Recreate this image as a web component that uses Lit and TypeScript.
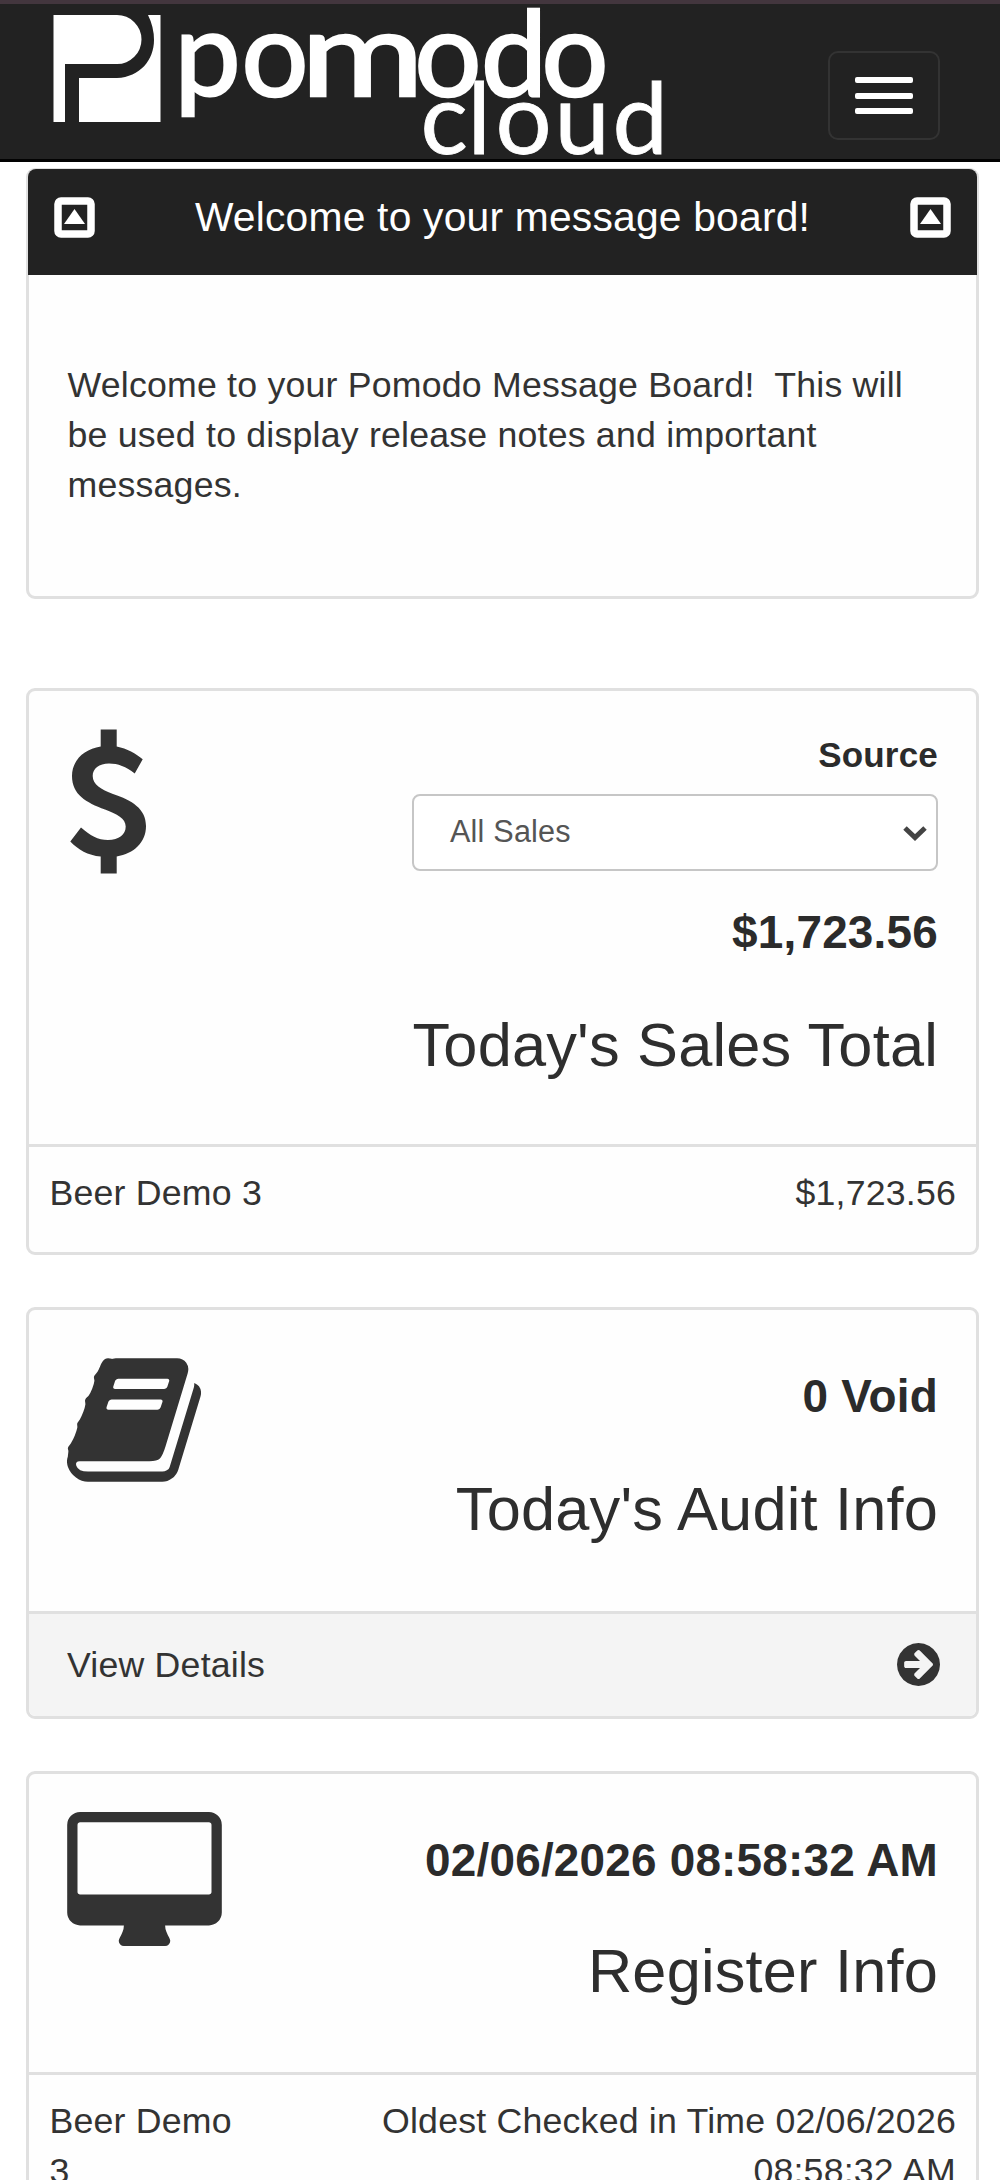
import { LitElement, html, css, svg } from "lit";
import { customElement } from "lit/decorators.js";

const dollarIcon = svg`<path d="M100.700 729H116.700V746C127 748 136 753 142.700 758.800L134.700 773C126 766 118 763 109 763C99 763 92.700 768 92.700 775.500C92.700 784 101 789 113 793.500C132 800 146 808 146 825.500C146 842 134 853 116.700 856V873H100.700V856C88 855 78 849 70.300 841L81 827C90 835 98 839.500 108 839.500C119 839.500 125.700 834 125.700 826C125.700 818 117 813.500 105 809C86 802 72 794 72 775.500C72 760 84 748.500 100.700 746Z"/>`;

const bookIcon = svg`<path d="M1703 478q40 57 18 129l-275 906q-19 64-76.500 107.500t-122.500 43.500h-923q-77 0-148.500-53.500t-99.500-131.500q-24-67-2-127 0-4 3-27t4-37q1-8-3-21.500t-3-19.500q2-11 8-21t16.500-23.500 16.500-23.500q23-38 45-91.500t30-91.500q3-10 .5-30t-.5-28q3-11 17-28t17-23q21-36 42-92t25-90q1-9-2.500-32t.5-28q4-13 22-30.500t22-22.500q19-26 42.500-84.500t27.500-96.500q1-8-3-25.500t-2-26.500q2-8 9-18t18-23 17-21q8-12 16.500-30.500t15-35 16-36 19.500-32 26.500-23.500 36-11.500 47.500 5.500l-1 3q38-9 51-9h761q74 0 114 56t18 130l-274 906q-36 119-71.500 153.500t-128.500 34.500h-869q-27 0-38 15-11 16-1 43 24 70 144 70h923q29 0 56-15.500t35-41.500l300-987q7-22 5-57 38 15 59 43zm-1064 2q-4 13 2 22.500t20 9.500h608q13 0 25.500-9.500t16.500-22.500l21-64q4-13-2-22.500t-20-9.500h-608q-13 0-25.500 9.500t-16.500 22.500zm-83 256q-4 13 2 22.500t20 9.500h608q13 0 25.500-9.500t16.500-22.500l21-64q4-13-2-22.500t-20-9.500h-608q-13 0-25.500 9.500t-16.500 22.500z"/>`;

const desktopIcon = svg`<path d="M1728 992v-832q0-13-9.500-22.500t-22.500-9.500h-1600q-13 0-22.500 9.500t-9.500 22.500v832q0 13 9.500 22.500t22.500 9.500h1600q13 0 22.500-9.500t9.500-22.500zm128-832v1088q0 66-47 113t-113 47h-544q0 37 16 77.500t32 71 16 43.500q0 26-19 45t-45 19h-512q-26 0-45-19t-19-45q0-14 16-44t32-70 16-78h-544q-66 0-113-47t-47-113v-1088q0-66 47-113t113-47h1600q66 0 113 47t47 113z"/>`;

const arrowIcon = svg`<path d="M1413 896q0-27-18-45l-91-91-362-362q-18-18-45-18t-45 18l-91 91q-18 18-18 45t18 45l189 189h-502q-26 0-45 19t-19 45v128q0 26 19 45t45 19h502l-189 189q-19 19-19 45t19 45l91 91q18 18 45 18t45-18l362-362 91-91q18-18 18-45zm251 0q0 209-103 385.500t-279.500 279.500-385.500 103-385.500-103-279.500-279.500-103-385.500 103-385.500 279.500-279.500 385.500-103 385.500 103 279.500 279.500 103 385.500z"/>`;

@customElement("caret-box")
class CaretBox extends LitElement {
  static styles = css`
    :host { display: block; width: 41px; height: 41px; }
    .icon { display: block; width: 41px; height: 41px; }
  `;
  render() {
    return html`<svg class="icon" viewBox="0 0 41 41">
      <rect x="4" y="4" width="33" height="33" rx="3" fill="none" stroke="#fff" stroke-width="7.500" />
      <path d="M20.500 12L31 27H10Z" fill="#fff" />
    </svg>`;
  }
}

@customElement("app-navbar")
class AppNavbar extends LitElement {
  static styles = css`
    :host { display: block; }
    .bar {
      box-sizing: border-box;
      height: 162px;
      background: #222;
      border-top: 4px solid #43363e;
      border-bottom: 3px solid #020202;
      display: flex;
      justify-content: space-between;
      align-items: flex-start;
      padding-right: 60px;
    }
    .logo { display: block; width: 680px; height: 155px; }
    .brand, .sub { font-family: Lato, sans-serif; font-weight: 400; fill: #fff; stroke: #fff; }
    .brand { font-size: 118px; stroke-width: 2.500px; }
    .sub { font-size: 99px; stroke-width: 0.800px; }
    .toggle {
      box-sizing: border-box;
      width: 112px;
      height: 89px;
      margin-top: 47px;
      padding: 0;
      background: transparent;
      border: 2px solid #333;
      border-radius: 10px;
      display: flex;
      flex-direction: column;
      align-items: center;
      justify-content: center;
      gap: 9.500px;
    }
    .line { width: 58px; height: 6px; border-radius: 2px; background: #fff; }
  `;
  render() {
    return html`<div class="bar">
      <svg class="logo" viewBox="0 4 680 155" fill="#fff">
        <path d="M53.500 15H117A24.500 24.500 0 0 1 117 64H65V122H53.500Z" />
        <path d="M148 15H160.500V122H79V78H117C140 77 154 60 154 40Q154 27 148 15Z" />
        <text class="brand" y="95.500"><tspan x="174.500 241.500">po</tspan><tspan x="301" textLength="123" lengthAdjust="spacingAndGlyphs">m</tspan><tspan x="414.500 481 541.500">odo</tspan></text>
        <text class="sub" y="153.500" x="420.500 467.500 495.500 554.500 612.500">cloud</text>
      </svg>
      <button class="toggle" aria-label="Menu">
        <span class="line"></span><span class="line"></span><span class="line"></span>
      </button>
    </div>`;
  }
}

@customElement("app-root")
class AppRoot extends LitElement {
  static styles = css`
    :host {
      display: block;
      height: 2180px;
      overflow: hidden;
      background: #fff;
      color: #333;
      font: 35.700px/50px "Liberation Sans", Arial, sans-serif;
      letter-spacing: 0.200px;
    }
    .page { display: flex; flex-direction: column; padding: 6px 21px 0 26px; }
    .card {
      box-sizing: border-box;
      border: 3px solid #e0e0e0;
      border-radius: 9px;
      background: #fefefe;
    }
    .board { height: 431px; margin-bottom: 89px; }
    .sales { height: 567px; margin-bottom: 52px; }
    .audit { height: 412px; margin-bottom: 52px; }
    .register { height: 500px; }
    .board-head {
      box-sizing: border-box;
      display: flex;
      justify-content: space-between;
      align-items: flex-start;
      height: 106px;
      margin: -2px -1px 0;
      padding: 28px 26px 0 26px;
      background: #222;
      border-radius: 8px 8px 0 0;
      color: #fff;
    }
    .board-title { font-size: 40.800px; line-height: 50px; margin-top: -5px; white-space: nowrap; }
    .board-text { padding: 85px 60px 0 38.500px; }
    .body {
      box-sizing: border-box;
      display: flex;
      justify-content: space-between;
      align-items: flex-start;
      padding: 0 38px;
    }
    .sales .body { height: 453px; padding-top: 38px; }
    .audit .body { height: 301px; padding-top: 48px; }
    .register .body { height: 298px; padding-top: 38px; }
    .glyph { display: block; fill: #333; flex: none; }
    .dollar { width: 80px; height: 145px; }
    .book { width: 134px; height: 124px; }
    .desktop { width: 155px; height: 134px; }
    .info { display: flex; flex-direction: column; align-items: flex-end; white-space: nowrap; }
    .label { font-weight: 700; font-size: 35px; color: #2b2b2b; margin-top: 1px; }
    .select {
      box-sizing: border-box;
      display: flex;
      justify-content: space-between;
      align-items: center;
      width: 526px;
      height: 77px;
      margin: 14px 0 28.500px 0;
      padding: 0 9px 3px 36px;
      border: 2px solid #c6c6c6;
      border-radius: 8px;
      background: #fff;
      color: #555;
      font-size: 30.600px;
    }
    .chevron { width: 24px; height: 16px; fill: none; stroke: #444; stroke-width: 5; margin-top: 3px; }
    .value { font-weight: 700; font-size: 45.900px; line-height: 64px; color: #2b2b2b; }
    .title { font-size: 61.300px; line-height: 68px; margin-top: 47px; color: #2e2e2e; }
    .audit .value { margin-top: 6px; }
    .audit .title { margin-top: 47px; }
    .register .value { margin-top: 16px; }
    .register .title { margin-top: 44.500px; }
    .row {
      display: flex;
      justify-content: space-between;
      border-top: 3px solid #e0e0e0;
      padding: 21px 20px 0 20.500px;
    }
    .site { width: 200px; }
    .site-wide { white-space: nowrap; }
    .amount { text-align: right; width: 600px; }
    .footer {
      box-sizing: border-box;
      height: 105px;
      display: flex;
      justify-content: space-between;
      align-items: flex-start;
      padding: 26px 36px 0 38px;
      background: #f4f4f4;
      border-top: 3px solid #e0e0e0;
      border-radius: 0 0 7px 7px;
    }
    .arrow { width: 43px; height: 43px; margin-top: 3px; }
  `;

  render() {
    return html`
      <app-navbar></app-navbar>
      <main class="page">
        <section class="card board">
          <div class="board-head">
            <caret-box></caret-box>
            <span class="board-title">Welcome to your message board!</span>
            <caret-box></caret-box>
          </div>
          <div class="board-text">Welcome to your Pomodo Message Board!&nbsp; This will be used to display release notes and important messages.</div>
        </section>

        <section class="card sales">
          <div class="body">
            <svg class="glyph dollar" viewBox="67 728.500 80 145">${dollarIcon}</svg>
            <div class="info">
              <span class="label">Source</span>
              <div class="select" role="combobox">
                <span>All Sales</span>
                <svg class="chevron" viewBox="0 0 24 16"><path d="M2 3L12 12.500L22 3" /></svg>
              </div>
              <span class="value">$1,723.56</span>
              <span class="title">Today's Sales Total</span>
            </div>
          </div>
          <div class="row">
            <span class="site-wide">Beer Demo 3</span>
            <span class="amount">$1,723.56</span>
          </div>
        </section>

        <section class="card audit">
          <div class="body">
            <svg class="glyph book" viewBox="64 128 1664 1536">${bookIcon}</svg>
            <div class="info">
              <span class="value">0 Void</span>
              <span class="title">Today's Audit Info</span>
            </div>
          </div>
          <div class="footer">
            <span>View Details</span>
            <svg class="glyph arrow" viewBox="128 128 1536 1536">${arrowIcon}</svg>
          </div>
        </section>

        <section class="card register">
          <div class="body">
            <svg class="glyph desktop" viewBox="-64 0 1920 1664">${desktopIcon}</svg>
            <div class="info">
              <span class="value">02/06/2026 08:58:32 AM</span>
              <span class="title">Register Info</span>
            </div>
          </div>
          <div class="row">
            <span class="site">Beer Demo 3</span>
            <span class="amount">Oldest Checked in Time 02/06/2026 08:58:32 AM</span>
          </div>
        </section>
      </main>
    `;
  }
}
